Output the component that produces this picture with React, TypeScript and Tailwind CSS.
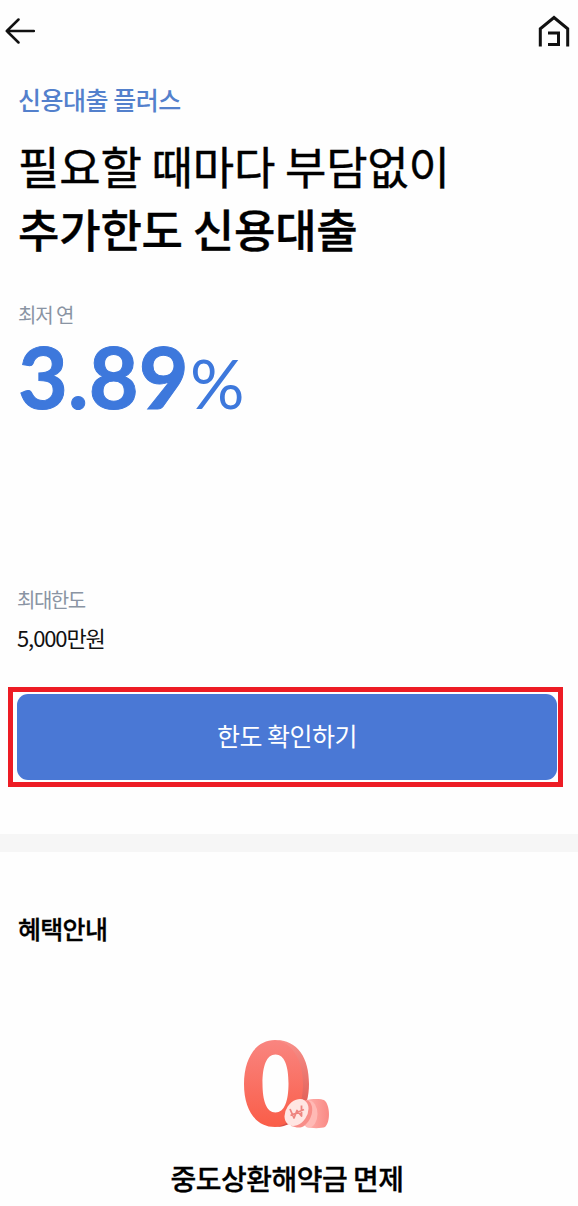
const hangul = "font-['Noto_Sans_CJK_KR',sans-serif]";

function BackIcon() {
  return (
    <svg width="30" height="26" viewBox="0 0 30 26" fill="none" stroke="#111" strokeWidth="2.5" strokeLinecap="round" strokeLinejoin="round">
      <path d="M13.500 1.500 1.800 13 13.500 24.500M1.800 13H29" />
    </svg>
  );
}

function HomeIcon() {
  return (
    <svg width="32" height="32" viewBox="0 0 32 32" fill="none" stroke="#111" strokeWidth="3">
      <path d="M2.300 31.500V13.800L16 2.500 29.700 13.800V31.500" />
      <path d="M10 18H20.500V29.500H10" />
    </svg>
  );
}

function ZeroFeeArt() {
  return (
    <svg width="90" height="92" viewBox="0 0 90 92">
      <defs>
        <linearGradient id="ring" x1="0" y1="0" x2="0" y2="1">
          <stop offset="0" stopColor="#f98580" />
          <stop offset="1" stopColor="#fa5d48" />
        </linearGradient>
        <linearGradient id="side" x1="0" y1="0" x2="0" y2="1">
          <stop offset="0" stopColor="#f8908a" />
          <stop offset="1" stopColor="#d94f46" />
        </linearGradient>
        <linearGradient id="coin" x1="0" y1="0" x2="1" y2="0">
          <stop offset="0" stopColor="#ffb0ac" />
          <stop offset="1" stopColor="#f98984" />
        </linearGradient>
      </defs>
      <path
        fill="url(#ring)"
        fillRule="evenodd"
        d="M33 2C14 2 2 20 2 46C2 71 13 89 33 89C51 89 62 71 62 46C62 20 51 2 33 2ZM33.500 16.500C42.500 16.500 46.500 28 46.500 45.500C46.500 63 42.500 74.500 33.500 74.500C24.500 74.500 20.500 63 20.500 45.500C20.500 28 24.500 16.500 33.500 16.500Z"
      />
      <path d="M33 2C56 2 67 20 67 46C67 70 56 89 33 89C50 87 61 71 61 46C61 22 50 4 33 2Z" fill="url(#side)" />
      <path d="M64 62C69 60.500 80 60.500 82 62C88 66 89 84 83 89C80 90.500 69 90.500 64 89Z" fill="url(#coin)" />
      <ellipse cx="67" cy="76" rx="8.500" ry="13.500" fill="#ffb9b5" />
      <path d="M58 61.500L66 62.500C73 67 71 81 62 88C58 90.500 54 89.500 49 88Z" fill="#f88d88" />
      <ellipse cx="54.500" cy="74.500" rx="10.600" ry="14.600" transform="rotate(34 54.500 74.500)" fill="#ffe6e3" />
      <path d="M48 71 52 80 55 72.500 59.500 78 59.500 67.500M48.500 77.500 62 71.500" fill="none" stroke="#ee8580" strokeWidth="1.800" strokeLinejoin="round" />
    </svg>
  );
}

export default function App() {
  return (
    <main className={`flex h-[1206px] w-[578px] flex-col overflow-hidden bg-[#fefefe] text-black ${hangul}`}>
      <header className="flex h-[78px] items-start justify-between pr-2 pl-[5px]">
        <button type="button" aria-label="뒤로" className="pt-[18px]">
          <BackIcon />
        </button>
        <button type="button" aria-label="홈" className="pt-[15px]">
          <HomeIcon />
        </button>
      </header>

      <section className="flex flex-col px-[18px]">
        <p className="h-[56px] text-[25px] leading-[42px] font-medium tracking-[-0.5px] text-[#5380cc]">신용대출 플러스</p>
        <h1 className="h-[167px] text-[45px] leading-[63px] tracking-[-0.2px] [-webkit-text-stroke:0.4px_#000]">
          <span className="block">필요할 때마다 부담없이</span>
          <span className="block font-medium">추가한도 신용대출</span>
        </h1>
        <p className="h-[36px] text-[20px] leading-[28px] tracking-[-1.1px] text-[#8a94a3]">최저 연</p>
        <p className="flex h-[249px] items-baseline font-['Lato',sans-serif] leading-[77px] text-[#3d78dc]">
          <span className="text-[86px] font-bold tracking-[0.2px] [-webkit-text-stroke:1px_#3d78dc]">3.89</span>
          <span className="ml-px text-[68px]">%</span>
        </p>
        <dl className="-ml-px h-[101px]">
          <dt className="h-[37px] text-[20px] leading-[28px] tracking-[-1.5px] text-[#8a94a3]">최대한도</dt>
          <dd className="text-[22px] leading-[28px] tracking-[-1.1px] text-[#111]">5,000만원</dd>
        </dl>
      </section>

      <div className="ml-2 h-[100px] w-[555px] border-[5px] border-[#ed1c24] px-1 py-[2px]">
        <button type="button" className="flex h-[86px] w-[540px] items-center justify-center rounded-[11px] bg-[#4a78d5] pb-[2px] text-[25px] tracking-[-0.5px] text-white">
          한도 확인하기
        </button>
      </div>

      <div className="mt-[47px] h-[18px] shrink-0 bg-[#f6f6f6]" />

      <section className="flex flex-col px-[18px]">
        <h2 className="mt-[60px] h-[126px] text-[25px] leading-[32px] font-medium tracking-[-0.7px] [-webkit-text-stroke:0.3px_#000]">혜택안내</h2>
        <div className="flex w-[538px] flex-col items-center">
          <div className="h-[122px]">
            <ZeroFeeArt />
          </div>
          <p className="text-[28px] leading-[36px] font-medium tracking-[-0.5px] [-webkit-text-stroke:0.3px_#000]">중도상환해약금 면제</p>
        </div>
      </section>
    </main>
  );
}
